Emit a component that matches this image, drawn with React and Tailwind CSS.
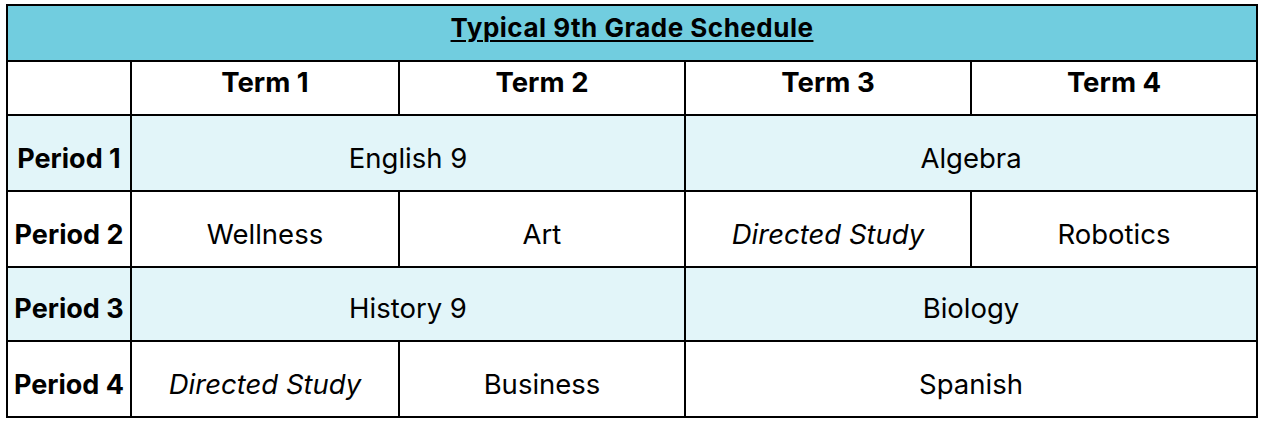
import React from "react";

const font = { fontFamily: "Inter, 'Liberation Sans', sans-serif" };

function Cell({ children, className = "" }) {
  return (
    <div className={"flex items-end justify-center leading-none text-black " + className}>
      {children}
    </div>
  );
}

export default function App() {
  const light = "bg-[#e2f5f9]";
  const white = "bg-white";
  const body = "text-[27.5px] pb-[18px]";
  const label = "text-[27px] font-bold pb-[18px]";
  const head = "text-[27.5px] font-bold pb-[18px]";
  return (
    <div className="w-[1266px] h-[424px] bg-white pt-[4px] pl-[6px]" style={font}>
      <div className="grid grid-cols-[122px_266px_284px_284px_284px] grid-rows-[54px_52px_74px_74px_72px_74px] gap-[2px] p-[2px] bg-black w-[1252px]">
        <Cell className="col-span-5 bg-[#71cddf] text-[26px] tracking-[0.5px] font-bold pb-[19px]">
          <span className="underline decoration-2 underline-offset-[3px]">Typical 9th Grade Schedule</span>
        </Cell>

        <Cell className={white} />
        <Cell className={white + " " + head}>Term 1</Cell>
        <Cell className={white + " " + head}>Term 2</Cell>
        <Cell className={white + " " + head}>Term 3</Cell>
        <Cell className={white + " " + head}>Term 4</Cell>

        <Cell className={light + " " + label}>Period 1</Cell>
        <Cell className={light + " col-span-2 " + body}>English 9</Cell>
        <Cell className={light + " col-span-2 " + body}>Algebra</Cell>

        <Cell className={white + " " + label}>Period 2</Cell>
        <Cell className={white + " " + body}>Wellness</Cell>
        <Cell className={white + " " + body}>Art</Cell>
        <Cell className={white + " italic " + body}>Directed Study</Cell>
        <Cell className={white + " " + body}>Robotics</Cell>

        <Cell className={light + " " + label}>Period 3</Cell>
        <Cell className={light + " col-span-2 " + body}>History 9</Cell>
        <Cell className={light + " col-span-2 " + body}>Biology</Cell>

        <Cell className={white + " " + label}>Period 4</Cell>
        <Cell className={white + " italic " + body}>Directed Study</Cell>
        <Cell className={white + " " + body}>Business</Cell>
        <Cell className={white + " col-span-2 " + body}>Spanish</Cell>
      </div>
    </div>
  );
}
